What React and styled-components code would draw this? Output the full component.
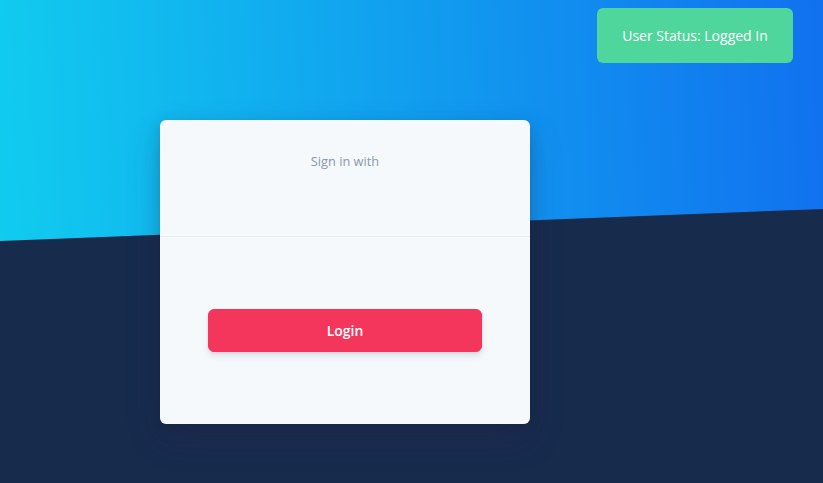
import React from "react";
import styled, { createGlobalStyle } from "styled-components";

const GlobalStyle = createGlobalStyle`
  html, body {
    margin: 0;
    padding: 0;
  }
  body {
    font-family: "Open Sans", "Liberation Sans", sans-serif;
    background: #172b4d;
  }
`;

const Page = styled.div`
  position: relative;
  min-height: 483px;
  background: #172b4d;
  overflow: hidden;

  &::before {
    content: "";
    position: absolute;
    inset: 0;
    background: linear-gradient(87deg, #11cdef 0, #1171ef 100%);
    clip-path: polygon(0 0, 100% 0, 100% 209px, 0 241px);
  }
`;

const Content = styled.div`
  position: relative;
  display: flex;
  flex-direction: column;
`;

const TopBar = styled.div`
  display: flex;
  justify-content: flex-end;
  padding: 8px 30px 0 0;
`;

const StatusBadge = styled.div`
  width: 196px;
  height: 55px;
  display: flex;
  align-items: center;
  justify-content: center;
  background: #4fd69c;
  color: #fff;
  font-size: 14px;
  border-radius: 6px;
`;

const Card = styled.div`
  width: 370px;
  margin: 57px 0 0 160px;
  background: #f5f9fc;
  border-radius: 6px;
  box-shadow: 0 15px 35px rgba(50, 50, 93, 0.2), 0 5px 15px rgba(0, 0, 0, 0.17);
  overflow: hidden;
`;

const CardHeader = styled.div`
  height: 117px;
  box-sizing: border-box;
  padding-top: 32px;
  text-align: center;
  border-bottom: 1px solid rgba(0, 0, 0, 0.05);
`;

const Muted = styled.div`
  color: #8898aa;
  font-size: 12.8px;
  line-height: 19px;
`;

const CardBody = styled.form`
  padding: 48px;
  display: flex;
  flex-direction: column;
`;

const LoginButton = styled.button`
  margin: 24px 0;
  height: 43px;
  border: 1px solid #f5365c;
  border-radius: 6px;
  background: #f5365c;
  color: #fff;
  font-family: "Open Sans", "Liberation Sans", sans-serif;
  font-weight: 600;
  font-size: 14px;
  box-shadow: 0 4px 6px rgba(50, 50, 93, 0.11), 0 1px 3px rgba(0, 0, 0, 0.08);
  cursor: pointer;
`;

export default function App() {
  return (
    <>
      <GlobalStyle />
      <Page>
        <Content>
          <TopBar>
            <StatusBadge>User Status: Logged In</StatusBadge>
          </TopBar>
          <Card>
            <CardHeader>
              <Muted>Sign in with</Muted>
            </CardHeader>
            <CardBody onSubmit={(e) => e.preventDefault()}>
              <LoginButton type="submit">Login</LoginButton>
            </CardBody>
          </Card>
        </Content>
      </Page>
    </>
  );
}
